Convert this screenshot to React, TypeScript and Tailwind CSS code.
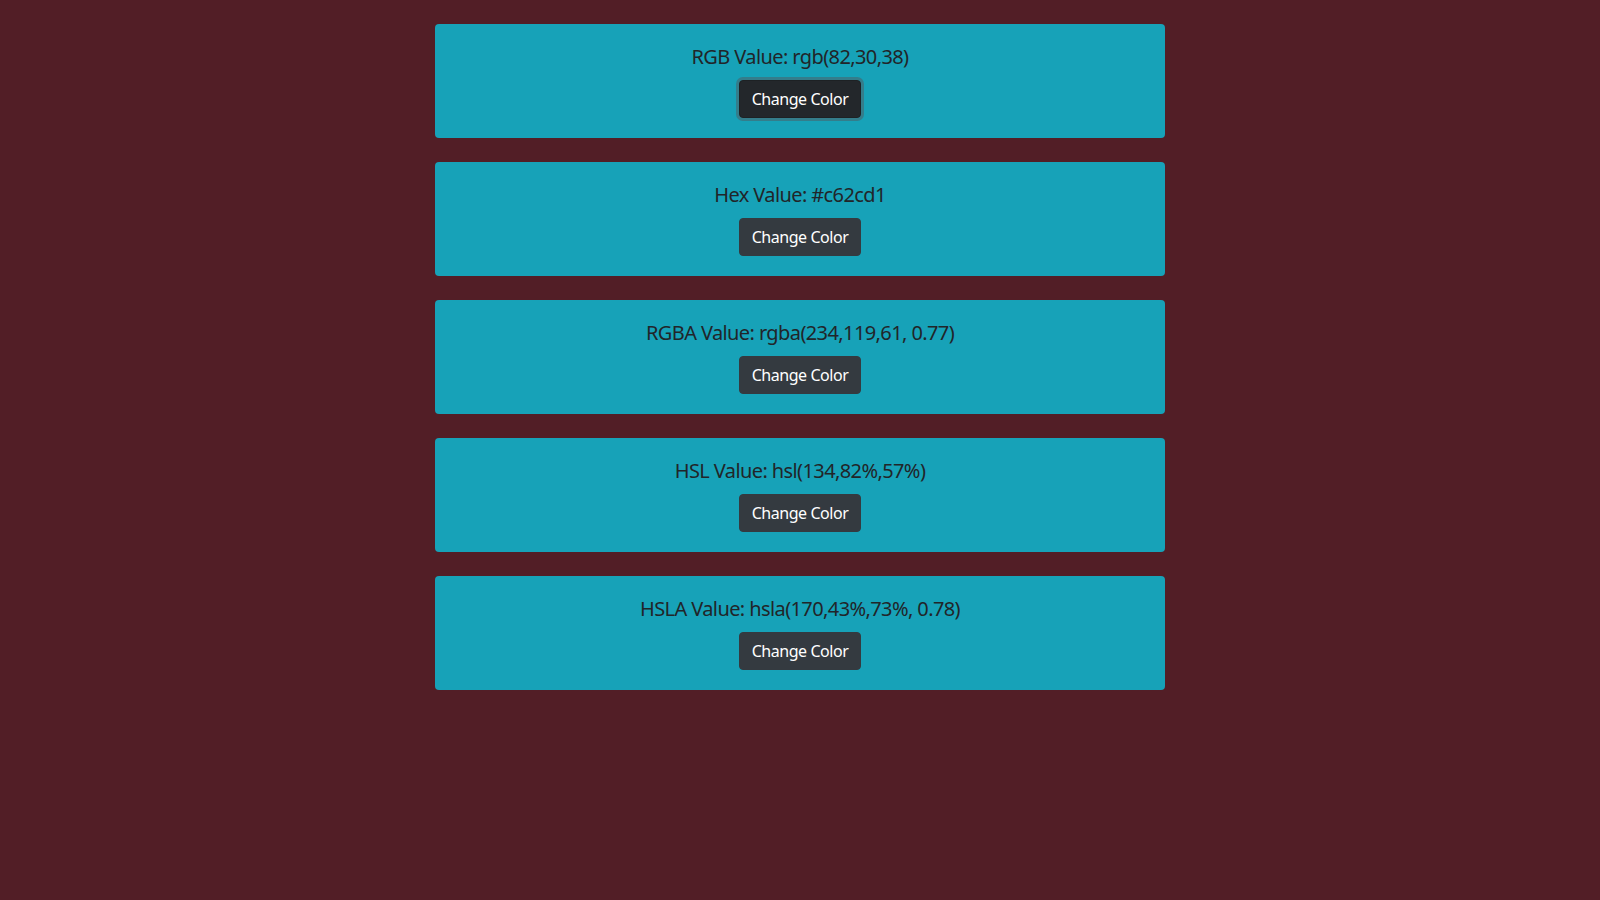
import React from "react";

const items = [
  "RGB Value: rgb(82,30,38)",
  "Hex Value: #c62cd1",
  "RGBA Value: rgba(234,119,61, 0.77)",
  "HSL Value: hsl(134,82%,57%)",
  "HSLA Value: hsla(170,43%,73%, 0.78)",
];

export default function App() {
  return (
    <div
      className="min-h-screen w-full bg-[#521e26] pt-6"
      style={{ fontFamily: '"Noto Sans", "Open Sans", sans-serif' }}
    >
      <div className="mx-auto flex w-[730px] flex-col gap-6">
        {items.map((t, i) => (
          <div key={i} className="rounded-[4px] bg-[#17a2b8] p-5 text-center">
            <h5 className="mb-[11px] pt-[1px] text-[20px] leading-[24px] font-normal tracking-[-0.6px] text-[#212529]">
              {t}
            </h5>
            <button
              className={
                "h-[38px] rounded-[4px] border px-3 text-[16px] leading-[24px] tracking-[-0.45px] text-white " +
                (i === 0
                  ? "border-[#1d2124] bg-[#23272b] shadow-[0_0_0_3px_rgba(82,88,93,0.5)]"
                  : "border-[#343a40] bg-[#343a40]")
              }
            >
              Change Color
            </button>
          </div>
        ))}
      </div>
    </div>
  );
}
